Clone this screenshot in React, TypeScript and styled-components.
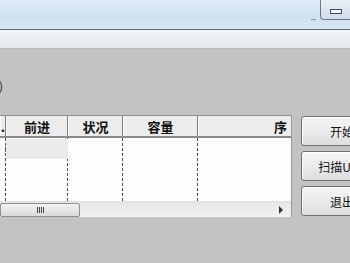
import React from "react";
import styled, { createGlobalStyle } from "styled-components";

const Global = createGlobalStyle`
  html, body { margin: 0; padding: 0; background: #c3c3c3; overflow: hidden; }
  body { font-family: "Noto Sans CJK SC", "Liberation Sans", sans-serif; }
`;

const Window = styled.div`
  width: 350px;
  height: 263px;
  display: flex;
  flex-direction: column;
  background: #c3c3c3;
  overflow: hidden;
`;

const TitleBar = styled.div`
  height: 29px;
  flex: none;
  display: flex;
  justify-content: flex-end;
  align-items: flex-start;
  background: linear-gradient(180deg, #e1ecf8 0%, #cfe0f2 50%, #d9e7f6 100%);
  border-bottom: 1px solid #5f6e7e;
`;

const Dots = styled.span`
  font-family: "Liberation Sans", sans-serif;
  font-size: 9px;
  color: #555;
  margin: 12px 5px 0 0;
  letter-spacing: -1px;
`;

const MinButton = styled.div`
  width: 32px;
  height: 20px;
  box-sizing: border-box;
  margin-right: -2px;
  border: 1px solid #6d7886;
  border-top: none;
  border-radius: 0 0 0 4px;
  background: linear-gradient(180deg, #e9f0f8, #cfdbe8);
  display: flex;
  align-items: center;
  justify-content: center;
  padding-top: 4px;
`;

const MinGlyph = styled.div`
  width: 10px;
  height: 3px;
  border: 1px solid #3d4a5a;
  background: #fff;
`;

const MenuBand = styled.div`
  height: 18px;
  flex: none;
  background: linear-gradient(180deg, #f3f5f8, #e3e7ec);
  border-bottom: 1px solid #b4bbc4;
`;

const Body = styled.div`
  flex: 1;
  display: flex;
  flex-direction: column;
  padding-top: 30px;
`;

const Caption = styled.div`
  height: 14px;
  margin-left: -14px;
  font-size: 12px;
  line-height: 14px;
  color: #222;
  white-space: nowrap;
`;

const ContentRow = styled.div`
  display: flex;
  margin-top: 22px;
  gap: 9px;
`;

const Table = styled.div`
  width: 292px;
  height: 102px;
  flex: none;
  box-sizing: border-box;
  background: #fdfdfd;
  border-right: 1px solid #9a9a9a;
  display: flex;
  flex-direction: column;
`;

const HeaderRow = styled.div`
  height: 23px;
  flex: none;
  display: flex;
  box-sizing: border-box;
  background: #ececec;
  border-top: 1px solid #8e8e8e;
  border-bottom: 2px solid #8a8a8a;
`;

const HeadCell = styled.div<{ $w: number; $align?: string; $pad?: number }>`
  width: ${(p) => p.$w}px;
  flex: none;
  box-sizing: border-box;
  border-right: 1px solid #7e7e7e;
  border-left: 1px solid #fafafa;
  display: flex;
  align-items: center;
  justify-content: ${(p) => p.$align || "center"};
  padding: 0 ${(p) => (p.$pad ?? 4)}px;
  font-size: 13px;
  font-weight: bold;
  color: #111;
  overflow: hidden;
  white-space: nowrap;
  &:last-child { border-right: none; flex: 1; }
`;

const Rows = styled.div`
  flex: 1;
  display: flex;
`;

const BodyCol = styled.div<{ $w: number }>`
  width: ${(p) => p.$w}px;
  flex: none;
  box-sizing: border-box;
  border-right: 1px dashed #555;
  display: flex;
  flex-direction: column;
  &:last-child { border-right: none; flex: 1; }
`;

const SelCell = styled.div`
  height: 20px;
  margin-top: 1px;
  background: #ebebeb;
  margin-right: -1px;
`;

const FocusMark = styled.div`
  height: 12px;
  width: 2px;
  margin: 6px 0 0 5px;
  border-left: 1px dotted #8a4060;
`;

const HScroll = styled.div`
  height: 15px;
  flex: none;
  display: flex;
  align-items: center;
  background: linear-gradient(180deg, #e6e6e6, #f2f2f2);
  border-top: 1px solid #e0e0e0;
`;

const Thumb = styled.div`
  width: 80px;
  height: 14px;
  box-sizing: border-box;
  border: 1px solid #8f8f8f;
  border-radius: 2px;
  background: linear-gradient(180deg, #f2f2f2, #d9d9d9);
  display: flex;
  align-items: center;
  justify-content: center;
`;

const Grip = styled.div`
  width: 7px;
  height: 6px;
  background: repeating-linear-gradient(90deg, #444 0 1px, transparent 1px 2px);
`;

const ScrollSpace = styled.div`
  flex: 1;
`;

const Arrow = styled.div`
  width: 0;
  height: 0;
  margin-right: 8px;
  border-top: 4px solid transparent;
  border-bottom: 4px solid transparent;
  border-left: 4px solid #333;
`;

const ButtonCol = styled.div`
  display: flex;
  flex-direction: column;
  gap: 5px;
  margin-top: 1px;
`;

const Button = styled.div`
  width: 82px;
  height: 30px;
  flex: none;
  box-sizing: border-box;
  border: 1px solid #6f6f6f;
  border-radius: 3px;
  background: linear-gradient(180deg, #f4f4f4 0%, #ebebeb 50%, #dddddd 100%);
  box-shadow: inset 1px 1px 0 #fff;
  display: flex;
  align-items: center;
  justify-content: center;
  font-size: 12px;
  color: #111;
  white-space: nowrap;
`;

const cols = [6, 62, 55, 75, 94];

export default function App() {
  return (
    <Window>
      <Global />
      <TitleBar>
        <Dots>...</Dots>
        <MinButton>
          <MinGlyph />
        </MinButton>
      </TitleBar>
      <MenuBand />
      <Body>
        <Caption>(O)</Caption>
        <ContentRow>
          <Table>
            <HeaderRow>
              <HeadCell $w={cols[0]} $align="flex-end" $pad={0}>
                .
              </HeadCell>
              <HeadCell $w={cols[1]}>前进</HeadCell>
              <HeadCell $w={cols[2]}>状况</HeadCell>
              <HeadCell $w={cols[3]}>容量</HeadCell>
              <HeadCell $w={cols[4]} $align="flex-end">
                序
              </HeadCell>
            </HeaderRow>
            <Rows>
              <BodyCol $w={cols[0]}>
                <FocusMark />
              </BodyCol>
              <BodyCol $w={cols[1]}>
                <SelCell />
              </BodyCol>
              <BodyCol $w={cols[2]} />
              <BodyCol $w={cols[3]} />
              <BodyCol $w={cols[4]} />
            </Rows>
            <HScroll>
              <Thumb>
                <Grip />
              </Thumb>
              <ScrollSpace />
              <Arrow />
            </HScroll>
          </Table>
          <ButtonCol>
            <Button>开始</Button>
            <Button>扫描USB</Button>
            <Button>退出</Button>
          </ButtonCol>
        </ContentRow>
      </Body>
    </Window>
  );
}
